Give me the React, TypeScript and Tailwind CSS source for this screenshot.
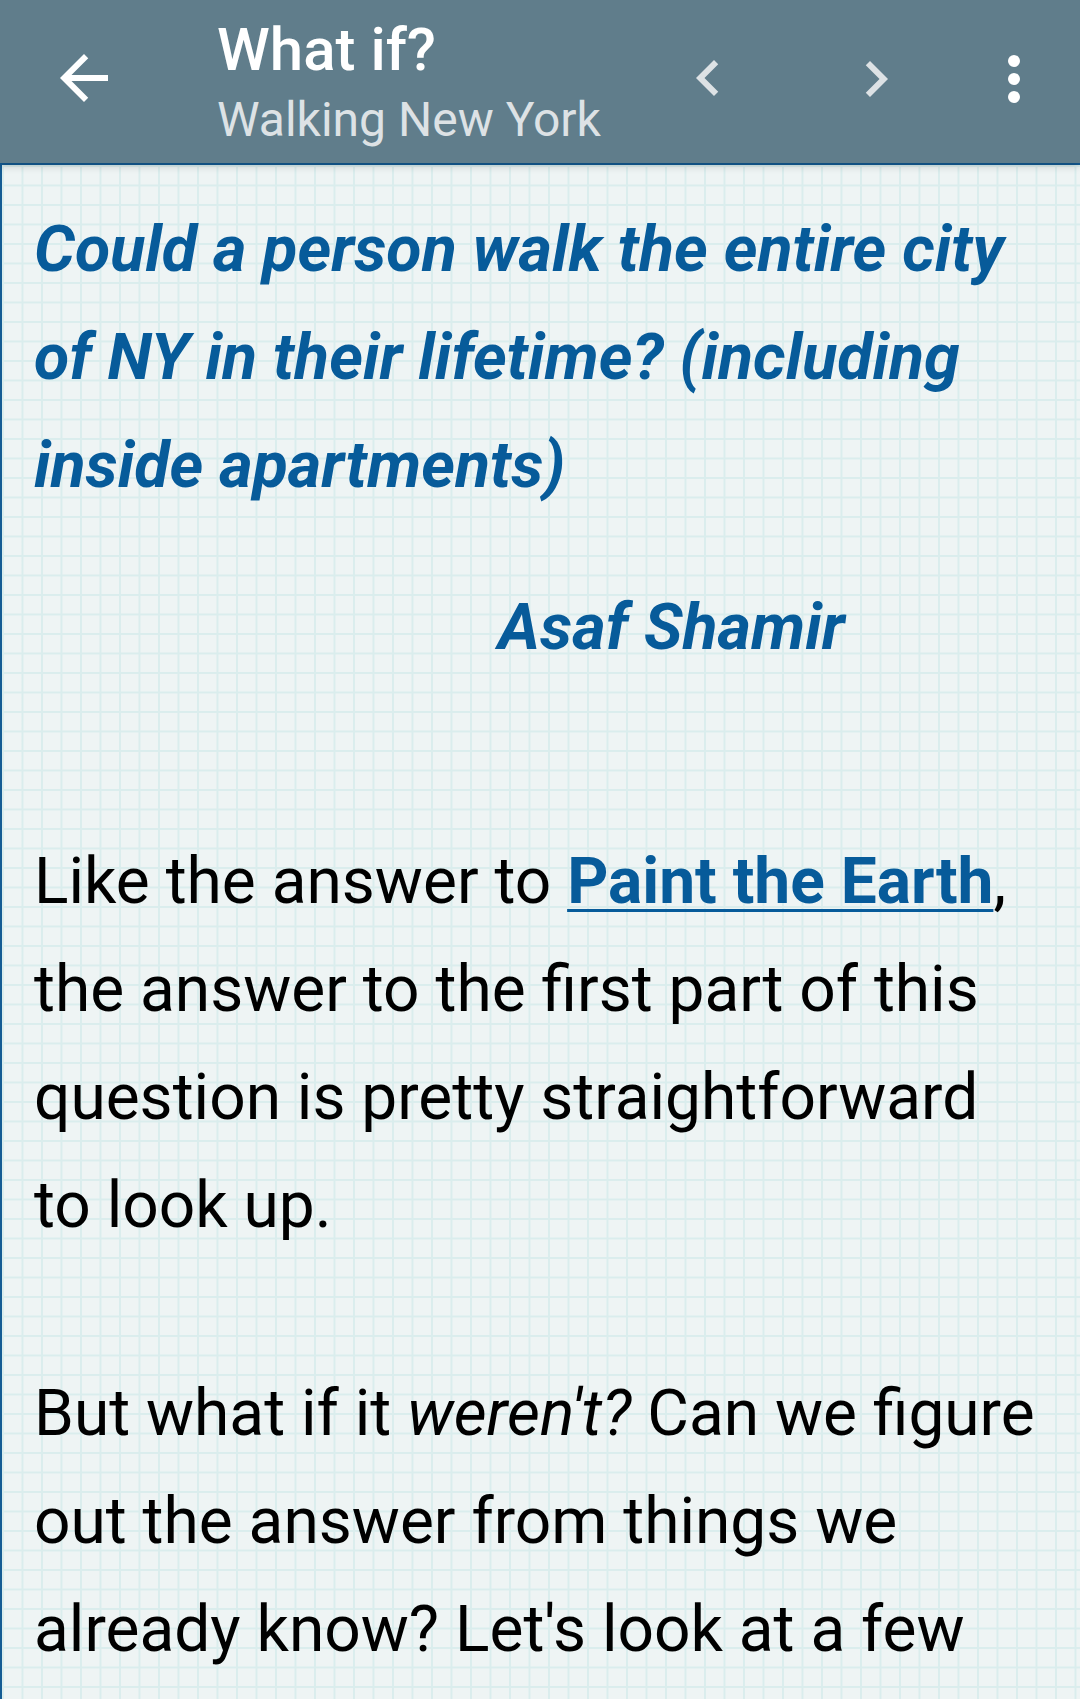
import React from 'react';

const ArrowBack: React.FC = () => (
  <svg width="72" height="72" viewBox="0 0 24 24" fill="#ffffff">
    <path d="M20 11H7.83l5.59-5.59L12 4l-8 8 8 8 1.41-1.41L7.83 13H20v-2z" />
  </svg>
);

const ChevronLeft: React.FC = () => (
  <svg width="72" height="72" viewBox="0 0 24 24" fill="#dde2e5">
    <path d="M15.41 7.41L14 6l-6 6 6 6 1.41-1.41L10.83 12z" />
  </svg>
);

const ChevronRight: React.FC = () => (
  <svg width="72" height="72" viewBox="0 0 24 24" fill="#dde2e5">
    <path d="M8.59 16.59L10 18l6-6-6-6-1.41 1.41L13.17 12z" />
  </svg>
);

const MoreVert: React.FC = () => (
  <svg width="72" height="72" viewBox="0 0 24 24" fill="#ffffff">
    <circle cx="12" cy="6" r="2" />
    <circle cx="12" cy="12" r="2" />
    <circle cx="12" cy="18" r="2" />
  </svg>
);

const App: React.FC = () => {
  return (
    <div className="w-[1080px] h-[1699px] overflow-hidden flex flex-col font-['Roboto',sans-serif]">
      {/* Toolbar */}
      <header className="relative z-10 h-[163px] shrink-0 bg-[#607d8b] flex items-start shadow-[0_3px_8px_rgba(0,0,0,0.18)]">
        <button className="ml-[48px] mt-[42px] w-[72px] h-[72px]">
          <ArrowBack />
        </button>
        <div className="ml-[97px] pt-[15px] flex-1">
          <div className="text-[60px] leading-[70px] font-medium text-white">What if?</div>
          <div className="mt-[7px] text-[48px] leading-[56px] text-[#dde2e5]">Walking New York</div>
        </div>
        <button className="mt-[42px] w-[72px] h-[72px]">
          <ChevronLeft />
        </button>
        <button className="ml-[96px] mt-[43px] w-[72px] h-[72px]">
          <ChevronRight />
        </button>
        <button className="ml-[66px] mr-[30px] mt-[43px] w-[72px] h-[72px]">
          <MoreVert />
        </button>
      </header>

      {/* Article on graph paper */}
      <main className="flex-1 border-t-2 border-l-2 border-[#155c94] bg-[#eef4f4] bg-[linear-gradient(to_right,#daeded_2px,transparent_2px),linear-gradient(to_bottom,#daeded_2px,transparent_2px)] bg-[size:19.5px_19.5px] pl-[32px] pr-[36px] pt-[30px]">
        <p className="text-[64.5px] leading-[108px] font-bold italic text-[#075b9a]">
          Could a person walk the entire city of NY in their lifetime? (including inside apartments)
        </p>
        <p className="mt-[54px] pl-[464px] text-[64.5px] leading-[108px] font-bold italic text-[#075b9a]">
          Asaf Shamir
        </p>
        <p className="mt-[147px] text-[64px] leading-[108px] text-black">
          Like the answer to{' '}
          <a className="font-bold text-[#075b9a] underline decoration-[3px] underline-offset-[6px]">
            Paint the Earth
          </a>
          , the answer to the first part of this question is pretty straightforward to look up.
        </p>
        <p className="mt-[100px] text-[64px] leading-[108px] text-black">
          But what if it <em className="italic">weren't?</em> Can we figure out the answer from things we already know? Let's look at a few
        </p>
      </main>
    </div>
  );
};

export default App;
